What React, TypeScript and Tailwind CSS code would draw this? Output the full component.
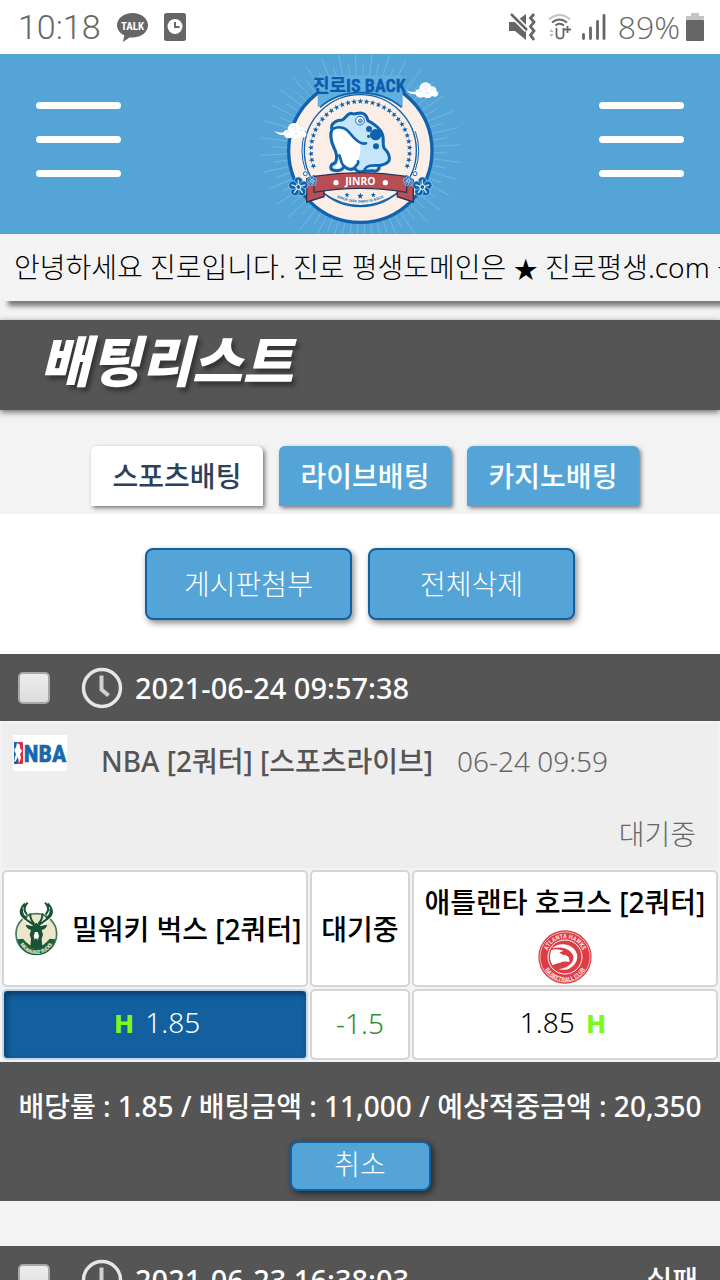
import { useState } from "react";

type TabId = "sports" | "live" | "casino";

const TABS: { id: TabId; label: string }[] = [
  { id: "sports", label: "스포츠배팅" },
  { id: "live", label: "라이브배팅" },
  { id: "casino", label: "카지노배팅" },
];

function star(cx: number, cy: number, r: number, rot = 0) {
  const pts: string[] = [];
  for (let i = 0; i < 10; i++) {
    const a = ((i * 36 - 90 + rot) * Math.PI) / 180;
    const d = i % 2 ? r * 0.42 : r;
    pts.push(`${(cx + d * Math.cos(a)).toFixed(1)},${(cy + d * Math.sin(a)).toFixed(1)}`);
  }
  return pts.join(" ");
}

function Flower({ x, y, r }: { x: number; y: number; r: number }) {
  return (
    <g transform={`translate(${x} ${y})`}>
      {[0, 72, 144, 216, 288].map((a) => (
        <g key={a} transform={`rotate(${a})`}>
          <circle cy={-r * 0.58} r={r * 0.42} fill="#0f62ad" stroke="#a9d6f2" strokeWidth={2} />
          <path d={`M0 ${-r * 0.15}V${-r * 0.68}`} stroke="#c9e8fb" strokeWidth={r * 0.13} strokeLinecap="round" />
        </g>
      ))}
      <circle r={r * 0.24} fill="#0f62ad" stroke="#fff" strokeWidth={r * 0.1} />
    </g>
  );
}

function Cloud({ x, y }: { x: number; y: number }) {
  return (
    <g transform={`translate(${x} ${y})`}>
      <path
        d="M0 24c8 6 16 7 26 5 2-6 7-8 12-7 0-12 8-20 18-21 9 0 16 5 18 12 10 0 17 6 15 14 7 3 7 11 2 15-5 4-11 3-15-1-4 8-16 10-24 3-9 6-22 3-25-7C16 37 4 34 0 24z"
        fill="#fff"
      />
      <path
        d="M48 18c1-9 13-9 14-1 0 6-8 7-9 2M34 32c-1-7 9-8 10-2M72 25c1-7 11-6 10 1M58 36c1-6 9-6 10 0"
        fill="none"
        stroke="#b7dcf3"
        strokeWidth={2}
      />
    </g>
  );
}

function SiteLogo() {
  const rays = Array.from({ length: 72 }, (_, i) => i * 5 + 2);
  const stars = Array.from({ length: 31 }, (_, i) => -198 + i * 7.2);
  return (
    <svg viewBox="0 12 660 540" className="h-[180px] w-[220px]" role="img" aria-label="진로 IS BACK">
      <g stroke="#74b7e1" strokeWidth={3}>
        {rays.map((a, i) => {
          const rad = (a * Math.PI) / 180;
          const end = i % 2 ? 300 : 262;
          return (
            <line
              key={a}
              x1={331 + 215 * Math.cos(rad)}
              y1={300 + 215 * Math.sin(rad)}
              x2={331 + end * Math.cos(rad)}
              y2={300 + end * Math.sin(rad)}
            />
          );
        })}
      </g>
      <circle cx={331} cy={302} r={215} fill="#fbeee6" stroke="#0f62ad" strokeWidth={10} />
      <path d="M203 76H458V172Q400 132 331 132T203 172z" fill="#62aedf" />
      <path d="M210 172Q260 128 331 128T455 172" fill="none" stroke="#0f62ad" strokeWidth={5} />
      <circle cx={331} cy={302} r={168} fill="#fbeee6" stroke="#0f62ad" strokeWidth={4} />
      <path d="M166 360a176 176 0 0 1 0-116M496 360a176 176 0 0 0 0-116" fill="none" stroke="#0f62ad" strokeWidth={3} />
      {stars.map((a) => {
        const rad = (a * Math.PI) / 180;
        return (
          <polygon
            key={a}
            points={star(331 + 148 * Math.cos(rad), 302 + 148 * Math.sin(rad), 9, a + 90)}
            fill="#0f62ad"
          />
        );
      })}
      <text
        x={328}
        y={126}
        textAnchor="middle"
        fill="#0a5cae"
        stroke="#0a5cae"
        strokeWidth={1}
        fontSize={54}
        fontWeight={700}
        className="[font-family:'Roboto_Condensed','Noto_Sans_CJK_KR',sans-serif]"
      >
        진로IS BACK
      </text>
      <Cloud x={470} y={96} />
      <Cloud x={75} y={218} />

      {/* toad */}
      <path
        d="M246 238C240 222 258 210 276 210C286 208 288 192 304 190C314 196 324 186 338 190C350 194 352 204 354 212C368 220 388 230 396 250C404 266 396 284 402 294C412 304 422 318 417 332C410 344 394 344 386 348C392 360 376 366 366 362C356 366 344 360 340 364C330 368 318 364 314 354C304 362 290 356 282 350C276 362 262 364 248 360C238 356 242 342 254 340C264 328 260 308 252 294C244 276 238 254 246 238z"
        fill="#c5e6fa"
        stroke="#0f62ad"
        strokeWidth={9}
        strokeLinejoin="round"
      />
      <path
        d="M251 242C264 232 282 234 296 252C306 266 320 276 330 282C334 304 328 324 318 342C308 356 292 350 280 338C274 354 262 358 252 352C272 340 270 314 258 290C250 272 246 256 251 242z"
        fill="#fff"
      />
      <path
        d="M249 236C272 226 290 236 302 252C316 270 334 284 348 280M268 316C274 328 272 342 284 350M314 354C318 342 328 344 324 334M344 358C352 344 368 346 386 346"
        fill="none"
        stroke="#0f62ad"
        strokeWidth={8}
        strokeLinecap="round"
      />
      <circle cx={330} cy={212} r={13} fill="#fff" stroke="#0f62ad" strokeWidth={3} />
      <circle cx={331} cy={213} r={6} fill="#6fb5e2" stroke="#0f62ad" strokeWidth={2} />
      <circle cx={377} cy={254} r={17} fill="#0f62ad" />
      <circle cx={357} cy={237} r={9} fill="#0f62ad" />
      <circle cx={356} cy={259} r={5} fill="#0f62ad" />
      <circle cx={378} cy={289} r={9} fill="#0f62ad" />

      {/* ribbon and lower arc */}
      <path d="M220 430q111 74 222 0" fill="none" stroke="#0f62ad" strokeWidth={4} />
      <path id="logo-arc" d="M246 436q85 44 170 0" fill="none" />
      <text fill="#0f62ad" fontSize={11} fontWeight={700} className="[font-family:'Liberation_Sans',sans-serif]">
        <textPath href="#logo-arc" startOffset="50%" textAnchor="middle">SINCE 1924 JINRO IS BACK</textPath>
      </text>
      <polygon points={star(291, 435, 8)} fill="#0f62ad" />
      <polygon points={star(331, 438, 10)} fill="#0f62ad" />
      <polygon points={star(370, 435, 8)} fill="#0f62ad" />
      <path d="M192 378l-22 8v70l52-16v-20zM470 378l20 12v66l-48-16v-20z" fill="#b84e54" stroke="#27355c" strokeWidth={4} />
      <path d="M192 379q139-22 278 0v48q-139-24-278 0z" fill="#b84e54" stroke="#27355c" strokeWidth={4} />
      <circle cx={258} cy={398} r={8} fill="#fff" />
      <circle cx={406} cy={398} r={8} fill="#fff" />
      <text
        x={331}
        y={406}
        textAnchor="middle"
        fill="#fff"
        fontSize={31}
        fontWeight={700}
        className="[font-family:'Open_Sans',sans-serif]"
      >
        JINRO
      </text>
      <Flower x={186} y={393} r={15} />
      <Flower x={475} y={393} r={15} />
      <Flower x={145} y={411} r={30} />
      <Flower x={517} y={411} r={30} />
      <circle cx={166} cy={371} r={6} fill="#fff" stroke="#0f62ad" strokeWidth={3} />
      <circle cx={495} cy={371} r={6} fill="#fff" stroke="#0f62ad" strokeWidth={3} />
    </svg>
  );
}

function StatusBar() {
  return (
    <div className="flex h-[54px] items-center justify-between bg-white pr-4 pl-[18px] text-[#666] [font-family:Roboto,sans-serif]">
      <div className="flex items-center">
        <span className="w-[99px] text-[34px] leading-[54px] font-light">10:18</span>
        <svg viewBox="0 0 31 29" className="h-[29px] w-[31px]" aria-hidden="true">
          <path d="M15.500 0C24 0 31 5.400 31 12.300s-7 12.300-15.500 12.300c-1 0-2 0-3-.2L6 29l1.300-6.500C3 20.500 0 16.500 0 12.300 0 5.400 7 0 15.500 0z" fill="#666" />
          <text x="15.500" y="16.500" textAnchor="middle" fontSize="11" fontWeight="700" fill="#fff" className="[font-family:'Roboto_Condensed','Open_Sans',sans-serif]">TALK</text>
        </svg>
        <svg viewBox="0 0 22 28" className="ml-4 h-[28px] w-[22px]" aria-hidden="true">
          <rect width="22" height="28" rx="2.500" fill="#666" />
          <circle cx="11" cy="13.500" r="7.500" fill="#fff" />
          <path d="M11 9v5h4.500" fill="none" stroke="#666" strokeWidth="2" />
        </svg>
      </div>
      <div className="flex items-center">
        <svg viewBox="0 0 27 28" className="h-[28px] w-[27px]" aria-hidden="true">
          <path d="M0 9h6L17 1v26L6 18H0z" fill="#666" />
          <path d="M1 0l17 17" stroke="#fff" strokeWidth="6" />
          <path d="M2 1l16 16" stroke="#666" strokeWidth="2.500" />
          <path d="M25 1l-3.500 4 3.500 4-3.500 4.500L25 18l-3.500 4 3.500 5" fill="none" stroke="#666" strokeWidth="2.800" />
        </svg>
        <svg viewBox="0 0 24 26" className="ml-3 h-[26px] w-[24px]" aria-hidden="true">
          <path d="M1 5.500q11-9 21 0" fill="none" stroke="#c4c4c4" strokeWidth="2" />
          <path d="M4 8.500q7.500-6 15 0M7.500 11.500q4-3.500 8.500 0" fill="none" stroke="#666" strokeWidth="2" />
          <path d="M8.500 14v7q0 3.500 3.500 3.500t3.500-3.500v-7M16 15.500h7M19.500 12v7" fill="none" stroke="#666" strokeWidth="1.800" />
          <path d="M3.500 15l2 3h-4zM3.500 23l2-3h-4z" fill="#bbb" />
        </svg>
        <svg viewBox="0 0 24 26" className="ml-2.5 h-[26px] w-[24px]" aria-hidden="true">
          <path d="M1.500 20.500v4M8.500 14v10.500M15.500 7.500v17M22 1.500v23" stroke="#666" strokeWidth="2.800" strokeLinecap="round" />
        </svg>
        <span className="ml-3 text-[32px] leading-[54px] font-light [font-family:'Open_Sans',sans-serif]">89%</span>
        <svg viewBox="0 0 18 28" className="ml-1.5 h-[28px] w-[18px]" aria-hidden="true">
          <path d="M5 0h8v3h5v4H0V3h5z" fill="#c4c4c4" />
          <rect y="7" width="18" height="21" rx="1" fill="#666" />
        </svg>
      </div>
    </div>
  );
}

function MenuButton({ label }: { label: string }) {
  return (
    <button type="button" aria-label={label} className="mt-12 flex h-[75px] w-[85px] flex-col justify-between">
      <span className="h-[7px] w-full rounded-full bg-white" />
      <span className="h-[7px] w-full rounded-full bg-white" />
      <span className="h-[7px] w-full rounded-full bg-white" />
    </button>
  );
}

function ClockIcon() {
  return (
    <svg viewBox="0 0 42 42" className="ml-[31px] h-[42px] w-[42px]" fill="none" aria-hidden="true">
      <circle cx="21" cy="21" r="18.500" stroke="#e6e6e6" strokeWidth="3.500" />
      <path d="M20.500 8.500v14l7 6" stroke="#d0d0d0" strokeWidth="4" />
    </svg>
  );
}

function BetHeader({ time, result }: { time: string; result?: string }) {
  return (
    <div className="flex h-[67px] items-center bg-[#555] px-[18px] font-medium text-white">
      <input
        type="checkbox"
        aria-label={time}
        className="h-8 w-8 appearance-none rounded-[5px] border-2 border-[#a8a8a8] bg-linear-to-b from-[#eee] to-[#dcdcdc] checked:bg-[#54a4d8]"
      />
      <ClockIcon />
      <span className="ml-3 text-[29px]">{time}</span>
      {result && <span className="mr-1 ml-auto">{result}</span>}
    </div>
  );
}

function NbaLogo() {
  return (
    <svg viewBox="0 0 54 36" className="h-9 w-[54px] shrink-0" role="img" aria-label="NBA">
      <rect width="54" height="36" fill="#fff" />
      <rect x="1" y="7" width="4" height="22" fill="#1a62a8" />
      <rect x="5" y="7" width="5" height="22" rx="1" fill="#d8304a" />
      <path d="M4 8l3 2v3l2 3-2 3 1 4-2 5-1-6-3 5-1-1 2-7-2-4 2-3z" fill="#fff" />
      <text x="32" y="27" textAnchor="middle" fontSize="24" fontWeight="700" fill="#1768ac" stroke="#1768ac" strokeWidth=".6" className="[font-family:'Roboto_Condensed','Noto_Sans_CJK_KR',sans-serif]">NBA</text>
    </svg>
  );
}

function BucksLogo() {
  return (
    <svg viewBox="0 0 129 162" className="h-[54px] w-[43px] shrink-0" role="img" aria-label="Milwaukee Bucks">
      <circle cx="64" cy="96" r="61" fill="#eee6cb" stroke="#44795a" strokeWidth="5" />
      <path d="M7 112a58 58 0 0 0 114 0l-17-2q-40 50-80 0z" fill="#1b6038" />
      <g fill="none" stroke="#fff" strokeWidth="13">
        <path d="M30 6Q8 30 34 54l24 18M98 6q22 24-4 48L70 72" />
      </g>
      <g fill="none" stroke="#185434" strokeWidth="6">
        <path d="M30 4Q4 30 30 50l28 20M98 4q26 26 0 46L70 70M38 2Q20 20 36 38M90 2q18 18 2 36M22 20q-4 20 14 28M106 20q4 20-14 28M46 34q-2 16 12 32M82 34q2 16-12 32" />
      </g>
      <path d="M64 62l12 10 20-4q0 12-16 16l4 14-4 12 2 24-18 6-18-6 2-24-4-12 4-14Q34 80 32 68l20 4z" fill="#185434" />
      <path d="M60 90h8l4 12-4 14h-8l-4-14z" fill="#fff" />
      <path d="M60 110h8v8h-8z" fill="#185434" />
      <path id="bucks-arc" d="M10 102a54 54 0 0 0 108 0" fill="none" />
      <text fontSize="15" fontWeight="700" fill="#e6f2e6" className="[font-family:'Roboto_Condensed','Liberation_Sans',sans-serif]">
        <textPath href="#bucks-arc" startOffset="50%" textAnchor="middle">MILWAUKEE BUCKS</textPath>
      </text>
    </svg>
  );
}

function HawksLogo() {
  return (
    <svg viewBox="0 0 162 162" className="h-[54px] w-[54px]" role="img" aria-label="Atlanta Hawks">
      <circle cx="81" cy="81" r="80" fill="#dc3c44" />
      <circle cx="81" cy="81" r="75" fill="none" stroke="#f3b7ba" strokeWidth="3" />
      <circle cx="81" cy="81" r="51" fill="#dc3c44" stroke="#fff" strokeWidth="3" />
      <path d="M42 54Q64 36 92 46Q118 58 118 82Q116 104 94 116Q78 122 62 118Q86 114 98 102Q108 92 106 78Q102 64 84 56Q62 50 42 54z" fill="#fff" />
      <path d="M40 60Q56 54 76 62Q72 66 64 66Q72 76 84 76Q96 80 94 96Q80 92 66 98Q54 100 44 106Q30 84 40 60z" fill="#fff" />
      <path d="M68 68Q76 66 82 72Q74 76 68 68z" fill="#dc3c44" />
      <path id="hawks-top" d="M25 81a56 56 0 0 1 112 0" fill="none" />
      <path id="hawks-bottom" d="M12 86a69 69 0 0 0 138 0" fill="none" />
      <g fontSize="19" fontWeight="700" fill="#fbdcdd" className="[font-family:'Roboto_Condensed','Liberation_Sans',sans-serif]">
        <text>
          <textPath href="#hawks-top" startOffset="50%" textAnchor="middle">ATLANTA HAWKS</textPath>
        </text>
        <text>
          <textPath href="#hawks-bottom" startOffset="50%" textAnchor="middle">BASKETBALL CLUB</textPath>
        </text>
      </g>
    </svg>
  );
}

function HandicapMark() {
  return <span className="mx-1 text-2xl font-bold text-[#7cf81c] [font-family:'DejaVu_Sans',sans-serif]">H</span>;
}

export default function App() {
  const [tab, setTab] = useState<TabId>("sports");

  return (
    <div className="overflow-x-hidden bg-[#f3f3f3] text-[28px] leading-9 font-light text-black [font-family:'Noto_Sans','Noto_Sans_CJK_KR',sans-serif]">
      <StatusBar />

      <header className="flex h-[180px] justify-between bg-[#54a4d8] px-9">
        <MenuButton label="메뉴" />
        <SiteLogo />
        <MenuButton label="내 정보" />
      </header>

      <p className="h-[67px] overflow-hidden bg-[#f3f3f3] pl-[14px] leading-[66px] whitespace-nowrap shadow-[8px_5px_5px_#777]">
        안녕하세요 진로입니다. 진로 평생도메인은 <span className="text-2xl">★</span> 진로평생.com <span className="text-2xl">★</span>
      </p>

      <div className="mt-[19px] flex h-[90px] bg-[#555] pl-10 shadow-[0_2px_6px_#666]">
        <h1 className="text-[55px] leading-[82px] font-black text-white italic [text-shadow:3px_4px_4px_#333]">배팅리스트</h1>
      </div>

      <nav className="flex justify-center gap-4 pt-9 pb-2 pl-[10px]">
        {TABS.map((t) => (
          <button key={t.id} type="button" onClick={() => setTab(t.id)}
            className={`h-[60px] w-[172px] rounded-t-md font-medium shadow-[2px_2px_4px_#777] ${tab === t.id ? "bg-white text-[#2d4159]" : "bg-[#54a4d8] text-white"}`}>
            {t.label}
          </button>
        ))}
      </nav>

      <div className="flex justify-center gap-4 bg-white py-[34px] text-white">
        <button type="button" className="h-[72px] w-[207px] rounded-lg border-2 border-[#12609f] bg-[#54a4d8] shadow-[2px_3px_6px_#888]">게시판첨부</button>
        <button type="button" className="h-[72px] w-[207px] rounded-lg border-2 border-[#12609f] bg-[#54a4d8] shadow-[2px_3px_6px_#888]">전체삭제</button>
      </div>

      <section>
        <BetHeader time="2021-06-24 09:57:38" />
        <table className="w-full table-fixed border-separate border-spacing-[2px] text-center">
          <colgroup>
            <col className="w-[43%]" />
            <col className="w-[14%]" />
            <col className="w-[43%]" />
          </colgroup>
          <tbody>
            <tr>
              <td colSpan={3} className="h-[145px] bg-[#eee] p-0 text-left align-top text-[#666]">
                <div className="flex items-start pt-3 pl-[11px]">
                  <NbaLogo />
                  <strong className="mt-2 ml-[34px] font-medium whitespace-nowrap text-[#555]">NBA [2쿼터] [스포츠라이브]</strong>
                  <span className="mt-2 ml-6 whitespace-nowrap">06-24 09:59</span>
                </div>
                <p className="mt-[37px] pr-[22px] text-right">대기중</p>
              </td>
            </tr>
            <tr className="font-medium">
              <td className="h-[117px] rounded-[5px] border-2 border-[#d5d5d5] bg-white p-0">
                <div className="flex items-center pl-[11px] whitespace-nowrap">
                  <BucksLogo />
                  <span className="ml-[14px]">밀워키 벅스 [2쿼터]</span>
                </div>
              </td>
              <td className="rounded-[5px] border-2 border-[#d5d5d5] bg-white p-0">대기중</td>
              <td className="rounded-[5px] border-2 border-[#d5d5d5] bg-white p-0">
                <div className="flex flex-col items-center gap-2.5 pt-2.5 whitespace-nowrap">
                  <span>애틀랜타 호크스 [2쿼터]</span>
                  <HawksLogo />
                </div>
              </td>
            </tr>
            <tr>
              <td className="h-[71px] rounded-[5px] border-2 border-[#c5d6e4] bg-[#12609f] p-0 pb-1 text-white shadow-[inset_2px_3px_6px_#083a66]">
                <HandicapMark /> 1.85
              </td>
              <td className="rounded-[5px] border-2 border-[#d5d5d5] bg-white p-0 pb-1 text-[#2f8f2f]">-1.5</td>
              <td className="rounded-[5px] border-2 border-[#d5d5d5] bg-white p-0 pb-1">
                1.85 <HandicapMark />
              </td>
            </tr>
          </tbody>
        </table>
        <div className="flex h-[139px] flex-col items-center bg-[#555] pt-[26px] text-white">
          <p className="font-medium whitespace-nowrap">배당률 : 1.85 / 배팅금액 : 11,000 / 예상적중금액 : 20,350</p>
          <button type="button" className="mt-[17px] h-[50px] w-[141px] rounded-lg border-2 border-[#12609f] bg-[#54a4d8] pb-1 shadow-[2px_2px_6px_#222]">취소</button>
        </div>
      </section>

      <section className="mt-[45px]">
        <BetHeader time="2021-06-23 16:38:03" result="실패" />
      </section>
    </div>
  );
}
